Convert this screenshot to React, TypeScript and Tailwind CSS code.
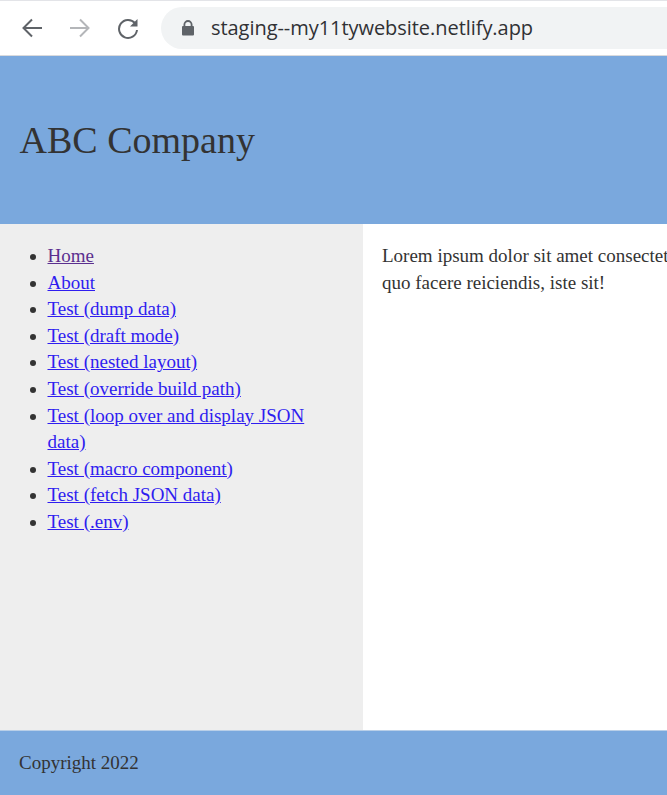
const links = [
  { label: "Home", visited: true },
  { label: "About" },
  { label: "Test (dump data)" },
  { label: "Test (draft mode)" },
  { label: "Test (nested layout)" },
  { label: "Test (override build path)" },
  { label: "Test (loop over and display JSON data)" },
  { label: "Test (macro component)" },
  { label: "Test (fetch JSON data)" },
  { label: "Test (.env)" },
];

function BrowserBar() {
  return (
    <div className="h-[56px] shrink-0 bg-white border-t-[1px] border-b-[1px] border-t-[#e3e4e8] border-b-[#d9dadd] flex items-center overflow-hidden">
      <div className="flex items-center pl-[20px] gap-[24px] shrink-0">
        <svg width="24" height="24" viewBox="0 0 24 24" fill="none" stroke="#5f6368" strokeWidth="2">
          <path d="M22 12H3.5M12 3.5 3.5 12l8.5 8.5" />
        </svg>
        <svg width="24" height="24" viewBox="0 0 24 24" fill="none" stroke="#b4b6b9" strokeWidth="2">
          <path d="M2 12h18.5M12 3.5l8.5 8.5-8.5 8.5" />
        </svg>
        <svg width="24" height="24" viewBox="0 0 24 24" fill="none">
          <path d="M19 7.2A9 9 0 1 0 21 14" stroke="#5f6368" strokeWidth="2" />
          <path d="M21.5 3v7.5H14z" fill="#5f6368" />
        </svg>
      </div>
      <div className="ml-[21px] flex-1 h-[42px] mr-[-40px] rounded-l-full bg-[#f1f3f4] flex items-center pl-[20px]">
        <svg width="14" height="16" viewBox="0 0 14 16" fill="#5f6368">
          <path d="M2.5 6V4.6a4.5 4.5 0 0 1 9 0V6h.5a1 1 0 0 1 1 1v7.5a1 1 0 0 1-1 1H2a1 1 0 0 1-1-1V7a1 1 0 0 1 1-1zm1.8 0h5.4V4.6a2.7 2.7 0 0 0-5.4 0z" />
        </svg>
        <span className="ml-[16px] font-['Open_Sans',sans-serif] text-[20px] tracking-[-0.05px] text-[#303134] whitespace-nowrap">
          staging--my11tywebsite.netlify.app
        </span>
      </div>
    </div>
  );
}

export default function App() {
  return (
    <div className="h-[795px] w-[667px] overflow-hidden flex flex-col font-['Liberation_Serif',serif] text-[19px] leading-[26.6px] text-[#333333]">
      <BrowserBar />
      <header className="h-[168px] shrink-0 bg-[#7aa8dd] flex items-center pl-[19.5px]">
        <h1 className="text-[38px] leading-[44px] font-normal">ABC Company</h1>
      </header>
      <div className="flex flex-1 min-h-0">
        <nav className="w-[363px] shrink-0 bg-[#eeeeee] pt-[19px] pl-[47.5px] pr-[40px]">
          <ul className="list-disc">
            {links.map((link) => (
              <li key={link.label}>
                <a href="#" className={link.visited ? "underline text-[#5b2f8f]" : "underline text-[#2f1df0]"}>
                  {link.label}
                </a>
              </li>
            ))}
          </ul>
        </nav>
        <main className="flex-1 min-w-0 bg-white pt-[19px] pl-[19px] overflow-hidden">
          <p className="whitespace-nowrap">
            Lorem ipsum dolor sit amet consectetur adipisicing elit.
            <br />
            quo facere reiciendis, iste sit!
          </p>
        </main>
      </div>
      <footer className="h-[65px] shrink-0 bg-[#7aa8dd] border-t-[1px] border-t-[#b9cfe8] flex items-center pl-[19px]">Copyright 2022</footer>
    </div>
  );
}
